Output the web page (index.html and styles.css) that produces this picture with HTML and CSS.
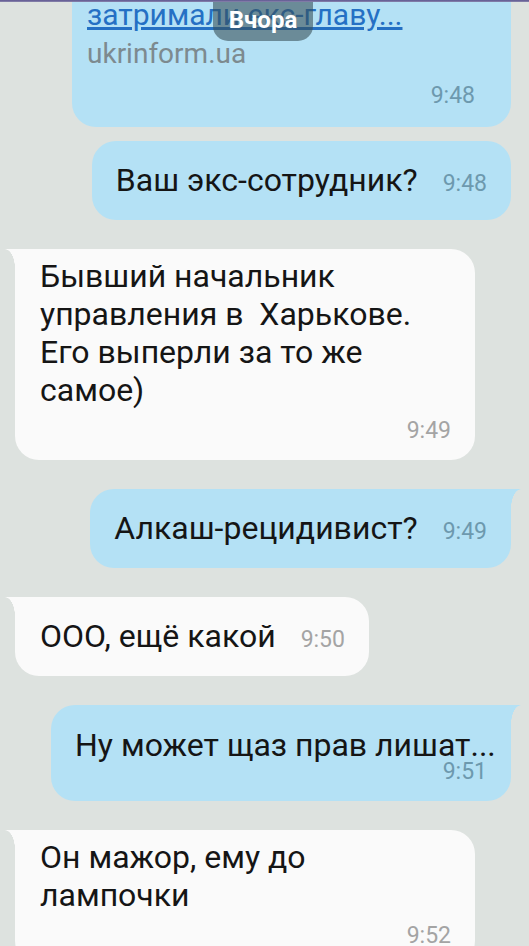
FILE: index.html
```html
<!DOCTYPE html>
<html>
<head>
    <title>Chat</title>
    <link rel="stylesheet" href="styles.css">
</head>
<body>
    <div class="topbar"></div>
    <div class="date-pill">Вчора</div>

    <div class="chat">
        <div class="msg out preview">
            <a class="link" href="#">затримали екс-главу...</a>
            <div class="site">ukrinform.ua</div>
            <span class="time">9:48</span>
        </div>

        <div class="msg out single same">
            <p class="text">Ваш экс-сотрудник?</p>
            <span class="time">9:48</span>
        </div>

        <div class="msg in tail wide multi first-in">
            <p class="text">Бывший начальник<br>управления в&nbsp; Харькове.<br>Его выперли за то же<br>самое)</p>
            <span class="time">9:49</span>
        </div>

        <div class="msg out tail single">
            <p class="text">Алкаш-рецидивист?</p>
            <span class="time">9:49</span>
        </div>

        <div class="msg in tail single">
            <p class="text">ООО, ещё какой</p>
            <span class="time">9:50</span>
        </div>

        <div class="msg out tail wide multi">
            <p class="text">Ну может щаз прав лишат...</p>
            <span class="time">9:51</span>
        </div>

        <div class="msg in tail wide multi last-in">
            <p class="text">Он мажор, ему до<br>лампочки</p>
            <span class="time">9:52</span>
        </div>
    </div>
</body>
</html>
```

FILE: styles.css
```css
body {
    margin: 0;
    background-color: #dde2df;
    font-family: Roboto, "Noto Sans", sans-serif;
    color: #151515;
    overflow: hidden;
}

.topbar {
    position: absolute;
    top: 0;
    left: 0;
    right: 0;
    height: 2px;
    background: linear-gradient(#5d5690, #8a86ad);
    z-index: 10;
}

.date-pill {
    position: absolute;
    top: 0;
    left: 213px;
    width: 100px;
    height: 41px;
    border-radius: 0 0 15px 15px;
    background-color: rgba(55, 78, 84, 0.58);
    color: #fff;
    font-weight: bold;
    font-size: 24px;
    line-height: 40px;
    text-align: center;
    z-index: 5;
}

.chat {
    display: flex;
    flex-direction: column;
    padding: 0 18px 0 15px;
}

.msg {
    position: relative;
    border-radius: 24px;
    padding: 0 24px 18px 25px;
    margin-top: 29px;
}

.msg.out {
    align-self: flex-end;
    background-color: #b4e1f5;
    padding-left: 24px;
}

.msg.in {
    align-self: flex-start;
    background-color: #fafafa;
}

.msg.same {
    margin-top: 14px;
}

.msg.wide {
    width: 460px;
    box-sizing: border-box;
}

.text {
    margin: 0;
    font-size: 32px;
    line-height: 38px;
    white-space: nowrap;
}

.time {
    font-size: 23px;
    line-height: 23px;
}

.out .time {
    color: #6d99ae;
}

.in .time {
    color: #a4a4a4;
}

/* single line: time sits at the end of the text */
.single {
    display: flex;
    align-items: baseline;
    gap: 25px;
    padding-top: 20px;
    padding-bottom: 21px;
}

/* several lines: time goes under the text, to the right */
.msg.multi {
    display: flex;
    flex-direction: column;
    padding-top: 21px;
    padding-bottom: 21px;
}

.multi .time {
    align-self: flex-end;
    line-height: 16px;
}

.msg.first-in,
.msg.last-in {
    padding-top: 8px;
    padding-bottom: 21px;
}

.first-in .time,
.last-in .time {
    margin-top: 14px;
}

/* link preview, its top is scrolled off */
.msg.preview {
    width: 439px;
    box-sizing: border-box;
    margin-top: 0;
    border-radius: 0 0 24px 24px;
    padding: 0 36px 20px 15px;
    display: flex;
    flex-direction: column;
}

.link {
    color: #2470c4;
    font-size: 30px;
    line-height: 30px;
}

.site {
    color: #7d8a8f;
    font-size: 28px;
    line-height: 32px;
    margin-top: 8px;
}

.preview .time {
    align-self: flex-end;
    margin-top: 14px;
}

/* bubble tails at the top corner */
.tail::before {
    content: "";
    position: absolute;
    top: 0;
    width: 11px;
    height: 19px;
}

.in.tail {
    border-top-left-radius: 0;
}

.in.tail::before {
    left: -10px;
    background: radial-gradient(ellipse 10px 19px at 0 100%, transparent 97%, #fafafa 100%);
}

.out.tail {
    border-top-right-radius: 0;
}

.out.tail::before {
    right: -10px;
    background: radial-gradient(ellipse 10px 19px at 100% 100%, transparent 97%, #b4e1f5 100%);
}
```
